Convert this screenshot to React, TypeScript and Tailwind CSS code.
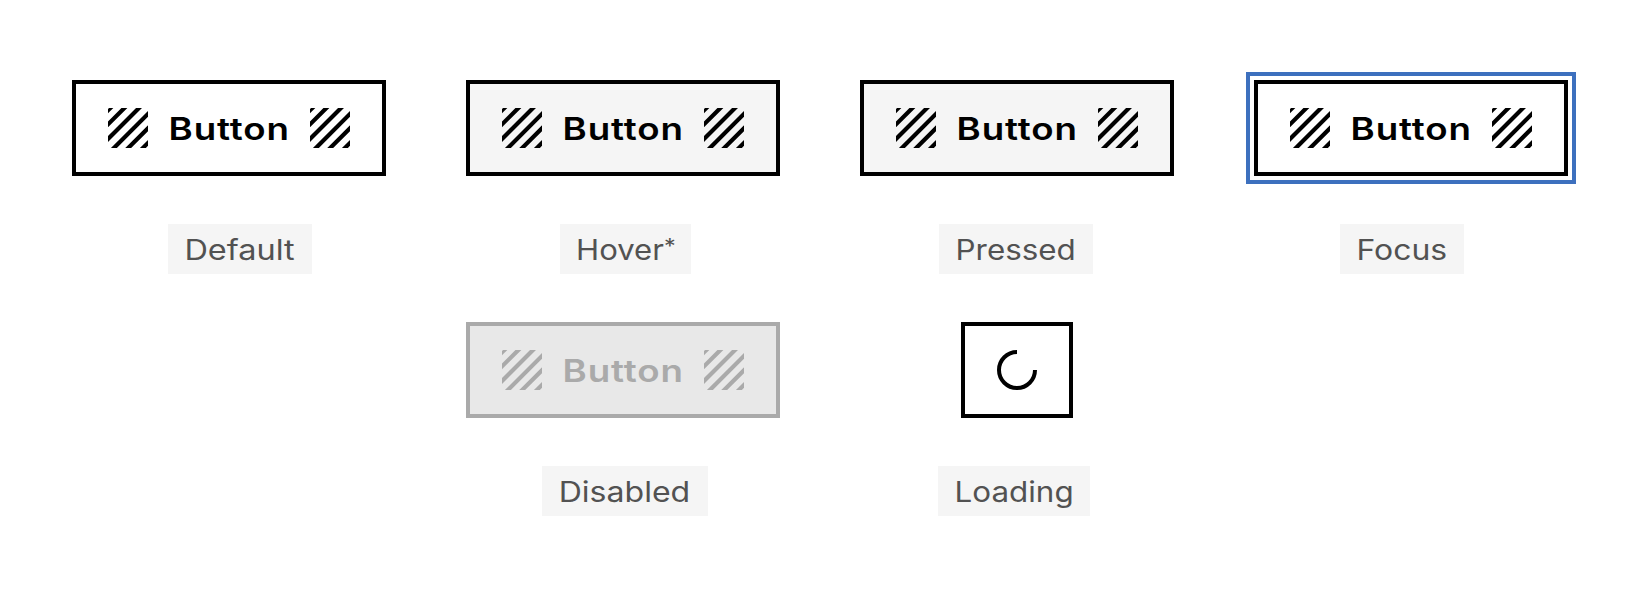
import React from "react";
import clsx from "clsx";

type ButtonState = "default" | "hover" | "focus" | "disabled";

const stateStyles: Record<ButtonState, string> = {
  default: "border-black bg-white text-black",
  hover: "border-black bg-[#f5f5f5] text-black",
  focus:
    "border-black bg-white text-black outline-4 outline-offset-4 outline-[#3d70be]",
  disabled: "border-[#aaaaaa] bg-[#e8e8e8] text-[#aaaaaa]",
};

const StripesIcon = () => (
  <svg
    className="size-10 shrink-0"
    viewBox="0 0 40 40"
    stroke="currentColor"
    strokeWidth="4.2"
  >
    <path d="M-10 13.2 L13.2 -10" strokeWidth="3" />
    <path d="M-10 26.4 L26.4 -10 M-10 41 L41 -10 M-10 55.9 L55.9 -10 M0 60.2 L60.2 0 M10 64.9 L64.9 10" />
  </svg>
);

const Button = ({ state }: { state: ButtonState }) => {
  return (
    <button
      disabled={state === "disabled"}
      className={clsx(
        "flex h-24 w-[314px] items-center justify-between border-4 px-8",
        stateStyles[state],
      )}
    >
      <StripesIcon />
      <span className="mt-0.5 inline-block scale-x-[1.185] text-[31px] leading-10 font-semibold tracking-[0.025em]">
        Button
      </span>
      <StripesIcon />
    </button>
  );
};

const LoadingButton = () => (
  <button className="flex h-24 w-28 items-center justify-center border-4 border-black bg-white">
    <svg
      className="size-10"
      viewBox="0 0 40 40"
      fill="none"
      stroke="black"
      strokeWidth="4"
    >
      <path d="M20 2 A18 18 0 1 0 38 20" />
    </svg>
  </button>
);

type LabelProps = {
  text: string;
  className: string;
  stretch: string;
  note?: boolean;
};

const Label = ({ text, className, stretch, note }: LabelProps) => (
  <div
    className={clsx(
      "flex h-[50px] shrink-0 items-center justify-center bg-[#f5f5f5] pt-0.5 text-[28px] leading-10 text-[#525252]",
      className,
    )}
  >
    <span className={clsx("inline-block", stretch)}>
      {text}
      {note && <span className="align-[6px] text-[21px] leading-none">*</span>}
    </span>
  </div>
);

export default function App() {
  return (
    <main className="h-[596px] w-[1642px] overflow-hidden bg-white pt-20 font-['Inter',sans-serif]">
      <div className="flex gap-20 pl-[72px]">
        <Button state="default" />
        <Button state="hover" />
        <Button state="hover" />
        <Button state="focus" />
      </div>
      <div className="mt-12 flex pl-[168px]">
        <Label
          text="Default"
          className="mr-[248px] w-36"
          stretch="scale-x-[1.16]"
        />
        <Label
          text="Hover"
          className="mr-[248px] w-[131px]"
          stretch="scale-x-[1.11]"
          note
        />
        <Label
          text="Pressed"
          className="mr-[247px] w-[154px]"
          stretch="scale-x-[1.12]"
        />
        <Label
          text="Focus"
          className="w-[124px]"
          stretch="scale-x-[1.14]"
        />
      </div>
      <div className="mt-12 flex gap-[181px] pl-[466px]">
        <Button state="disabled" />
        <LoadingButton />
      </div>
      <div className="mt-12 flex gap-[230px] pl-[542px]">
        <Label
          text="Disabled"
          className="w-[166px] pr-0.5"
          stretch="scale-x-[1.145]"
        />
        <Label
          text="Loading"
          className="w-[152px]"
          stretch="scale-x-[1.12]"
        />
      </div>
    </main>
  );
}
